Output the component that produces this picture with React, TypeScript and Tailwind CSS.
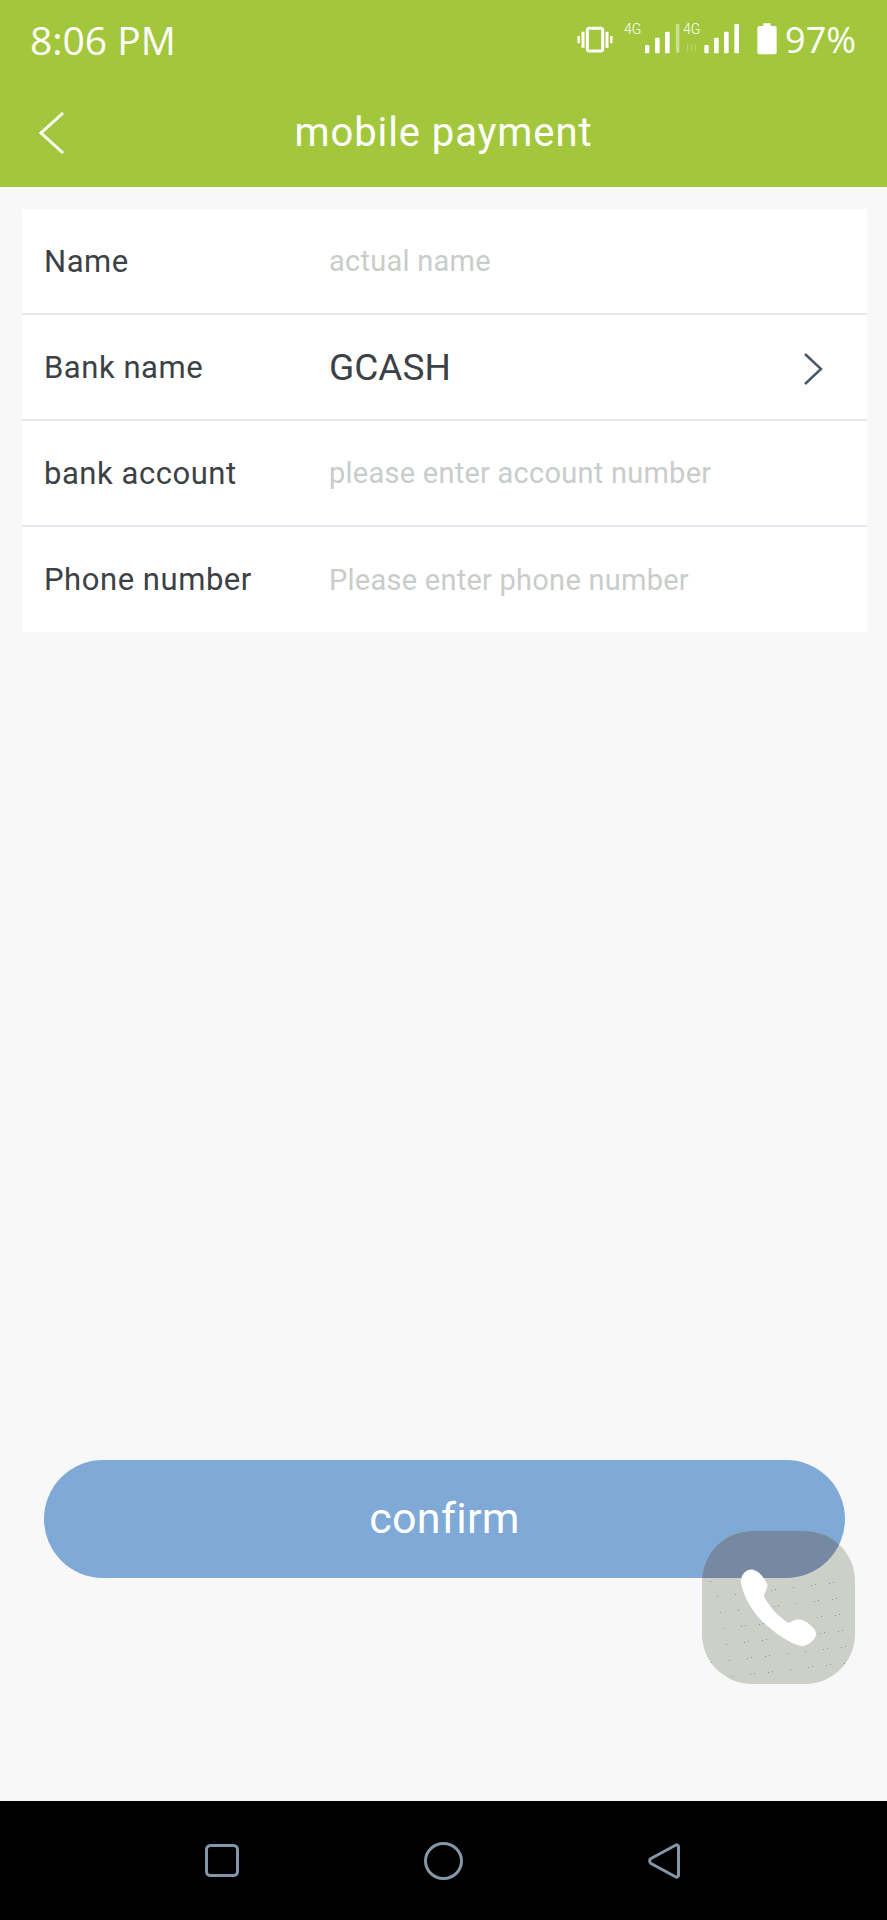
const font = { fontFamily: '"Roboto", "Liberation Sans", sans-serif' };

function StatusIcons() {
  return (
    <div className="flex items-center">
      <svg width="244" height="60" viewBox="100 30 732 180" fill="none" className="block">
        <g stroke="#fff">
          <rect x="137" y="85" width="46" height="68" rx="6" strokeWidth="9" />
          <path d="M124 95v48M196 95v48" strokeWidth="9" />
          <path d="M111 108v22M209 108v22" strokeWidth="7" />
        </g>
        <text x="247" y="101" fill="#fff" fontSize="42" fontFamily="Roboto, sans-serif" fontWeight="300">4G</text>
        <g fill="#fff">
          <rect x="310" y="135" width="13" height="25" rx="3" />
          <rect x="340" y="113" width="14" height="47" rx="3" />
          <rect x="370" y="95" width="14" height="65" rx="3" />
        </g>
        <rect x="403" y="72" width="10" height="86" fill="#fff" opacity="0.45" />
        <path d="M438 132v22M450 132v22M462 132v22" stroke="#fff" strokeWidth="3" opacity="0.3" />
        <text x="424" y="101" fill="#fff" fontSize="42" fontFamily="Roboto, sans-serif" fontWeight="300">4G</text>
        <g fill="#fff">
          <rect x="488" y="135" width="13" height="25" rx="3" />
          <rect x="517" y="113" width="14" height="47" rx="3" />
          <rect x="547" y="95" width="14" height="65" rx="3" />
          <rect x="578" y="72" width="14" height="88" rx="3" />
          <path d="M665 70h22v8h12a6 6 0 0 1 6 6v73a6 6 0 0 1-6 6h-46a6 6 0 0 1-6-6V84a6 6 0 0 1 6-6h12z" />
        </g>
      </svg>
      <span className="ml-[-34px] text-[36px] font-medium leading-none text-white" style={{ fontFamily: '"Open Sans", sans-serif' }}>97%</span>
    </div>
  );
}

function Row({ label, value, placeholder, chevron, last }: { label: string; value?: string; placeholder?: string; chevron?: boolean; last?: boolean }) {
  return (
    <div className={`flex items-center pl-[22px] pt-[2px] ${last ? "h-[105px]" : "h-[106px] border-b-2 border-[#e3e9ee]"}`}>
      <span className="w-[285px] shrink-0 text-[31px] tracking-[0.55px] text-[#3c4146]">{label}</span>
      {value ? (
        <span className="grow text-[37px] text-[#3c4146]">{value}</span>
      ) : (
        <span className="grow text-[29px] tracking-[0.25px] text-[#c9cdca]">{placeholder}</span>
      )}
      {chevron && (
        <svg width="20" height="34" viewBox="0 0 20 34" fill="none" className="mr-[44px] mt-[1px]">
          <path d="M2 2l16 15L2 32" stroke="#4b5a68" strokeWidth="2.5" />
        </svg>
      )}
    </div>
  );
}

const dots = Array.from({ length: 70 }, (_, i) => ({
  x: 8 + ((i * 67) % 137),
  y: 50 + ((i * 41) % 98),
}));

export default function App() {
  return (
    <div className="relative flex h-[1920px] w-[887px] flex-col overflow-hidden bg-[#f8f8f8]" style={font}>
      <header className="flex h-[187px] shrink-0 flex-col bg-[#a3c73c]">
        <div className="flex h-[80px] items-center justify-between pl-[30px] pr-[31px]">
          <span className="text-[39px] font-medium text-white" style={{ fontFamily: '"Open Sans", sans-serif' }}>8:06 PM</span>
          <StatusIcons />
        </div>
        <div className="relative flex grow items-center justify-center pb-[1px]">
          <svg width="28" height="46" viewBox="0 0 28 46" fill="none" className="absolute left-[38px] top-[30px]">
            <path d="M25 3L3 23l22 20" stroke="#fff" strokeWidth="3" />
          </svg>
          <span className="text-[40px] tracking-[0.9px] text-white">mobile payment</span>
        </div>
      </header>

      <main className="flex grow flex-col">
        <section className="ml-[22px] mr-[20px] mt-[22px] flex flex-col bg-white">
          <Row label="Name" placeholder="actual name" />
          <Row label="Bank name" value="GCASH" chevron />
          <Row label="bank account" placeholder="please enter account number" />
          <Row label="Phone number" placeholder="Please enter phone number" last />
        </section>
        <button className="mb-[223px] ml-[44px] mt-auto flex h-[118px] w-[801px] items-center justify-center rounded-[59px] bg-[#7fa9d6] pb-[2px] text-[43px] tracking-[0.3px] text-white">
          confirm
        </button>
      </main>

      <nav className="flex h-[119px] shrink-0 items-center gap-[185px] bg-black pl-[205px]">
        <svg width="34" height="33" viewBox="0 0 34 33" fill="none">
          <rect x="1.5" y="1.5" width="31" height="30" rx="4" stroke="#8298a8" strokeWidth="3" />
        </svg>
        <svg width="39" height="38" viewBox="0 0 39 38" fill="none">
          <ellipse cx="19.5" cy="19" rx="18" ry="17.5" stroke="#8298a8" strokeWidth="3" />
        </svg>
        <svg width="32" height="36" viewBox="0 0 32 36" fill="none">
          <path d="M27.5 2.2a2 2 0 0 1 3 2v27.6a2 2 0 0 1-3 2L3 20.5a3 3 0 0 1 0-5z" stroke="#8298a8" strokeWidth="3" strokeLinejoin="round" />
        </svg>
      </nav>

      <div className="absolute left-[702px] top-[1531px] h-[153px] w-[153px] overflow-hidden rounded-[50px] bg-[#cdd0c8]">
        <div className="absolute left-[-658px] top-[-71px] h-[118px] w-[801px] rounded-[59px] bg-[#7589a3]" />
        <svg width="153" height="153" viewBox="0 0 153 153" className="absolute left-0 top-0">
          {dots.map((d, i) => (
            <rect key={i} x={d.x} y={d.y} width="1" height="1" fill="#8f948d" />
          ))}
        </svg>
        <svg width="153" height="153" viewBox="127 272 458 459" className="absolute left-0 top-0">
          <path
            d="M243 425C243 400 262 385 280 388C298 392 312 410 322 432C326 445 312 455 312 468C325 495 355 530 385 547C395 547 403 536 418 537C438 540 465 562 469 578C470 600 440 618 425 617C395 612 345 578 315 550C280 518 250 470 243 425Z"
            fill="#fff"
          />
        </svg>
      </div>
    </div>
  );
}
